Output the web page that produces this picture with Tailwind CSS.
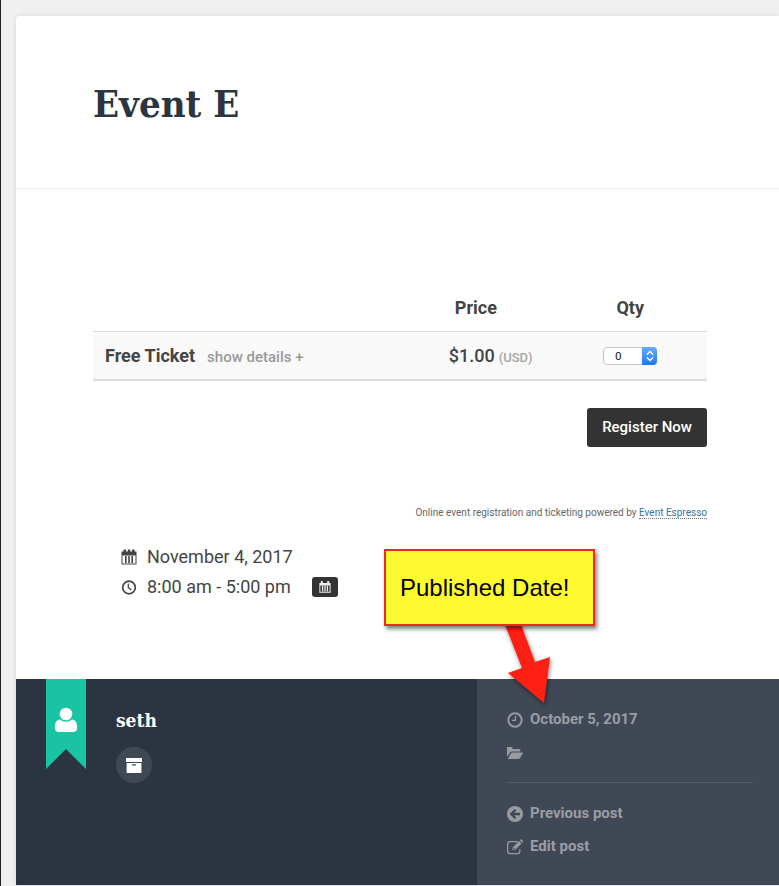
<!DOCTYPE html>
<html lang="en">
<head>
    <meta charset="UTF-8">
    <meta name="viewport" content="width=device-width, initial-scale=1.0">
    <title>Event E</title>
    <script src="https://cdn.jsdelivr.net/npm/@tailwindcss/browser@4"></script>
</head>
<body class="min-h-screen overflow-x-hidden border-l border-[#222222] bg-[#f0f0f0] pl-[15px] pt-4 font-[Roboto,sans-serif] text-[#444444]">
    <div class="relative rounded-tl-sm bg-white shadow-[0_0_5px_rgba(0,0,0,0.1)]">
        <!-- Title -->
        <header class="border-b border-[#ebebeb] pb-[62px] pl-[77px] pr-[72px] pt-[66px]">
            <h1 class="font-['DejaVu_Serif_Condensed','DejaVu_Serif',serif] text-[38px] font-bold leading-11 text-[#2b3541]">Event E</h1>
        </header>

        <!-- Tickets -->
        <main class="pb-[77px] pl-[77px] pr-[72px] pt-24">
            <table class="w-full table-fixed border-separate border-spacing-0">
                <thead>
                    <tr class="h-[46px] text-lg">
                        <td class="w-[56%]"></td>
                        <th class="w-[19%] pl-[18px] text-left font-bold">Price</th>
                        <th class="w-[25%] text-center font-bold">Qty</th>
                    </tr>
                </thead>
                <tbody>
                    <tr class="h-[50px]">
                        <td class="border-b-2 border-t border-[#dddddd] bg-[#f9f9f9] pl-3">
                            <div class="flex items-baseline gap-3">
                                <span class="text-lg font-bold">Free Ticket</span>
                                <a href="#" class="text-[15px] font-medium text-[#999999]">show details +</a>
                            </div>
                        </td>
                        <td class="whitespace-nowrap border-b-2 border-t border-[#dddddd] bg-[#f9f9f9] pl-3">
                            <span class="text-lg font-medium">$1.00</span>
                            <span class="text-[13px] font-medium text-[#a5a5a5]">(USD)</span>
                        </td>
                        <td class="border-b-2 border-t border-[#dddddd] bg-[#f9f9f9]">
                            <div class="relative mx-auto h-[18px] w-[54px]">
                                <select aria-label="Quantity" class="block h-[18px] w-full appearance-none rounded-[4px] border border-[#c4c4c4] bg-white pl-[11px] font-['Liberation_Sans',sans-serif] text-[11px] leading-4 text-black">
                                    <option>0</option>
                                    <option>1</option>
                                    <option>2</option>
                                </select>
                                <span class="pointer-events-none absolute right-0 top-0 flex h-[18px] w-[15px] items-center justify-center rounded-r-[4px] bg-linear-to-b from-[#66aef9] to-[#1a78f5]">
                                    <svg class="h-3 w-2" viewBox="0 0 8 12" fill="none" stroke="#fff" stroke-width="1.4" stroke-linecap="round" stroke-linejoin="round"><path d="M1.3 4.2 4 1.6l2.7 2.6M1.3 7.8 4 10.4l2.7-2.6"/></svg>
                                </span>
                            </div>
                        </td>
                    </tr>
                </tbody>
            </table>

            <div class="mt-[27px] flex justify-end">
                <button type="submit" class="h-[39px] rounded-[3px] bg-[#333333] px-[15px] text-[15px] font-medium text-white">Register Now</button>
            </div>

            <p class="mt-[57px] text-right text-[10px] leading-[18px] text-[#666666]">Online event registration and ticketing powered by <a href="#" class="border-b border-dotted border-[#777777] text-[#3a7399]">Event Espresso</a></p>

            <!-- Date and time -->
            <ul class="mt-5 pl-7 text-lg">
                <li class="flex h-[30px] items-center gap-[10px]">
                    <svg class="h-4 w-4" viewBox="0 0 16 16" fill="#444">
                        <path fill-rule="evenodd" d="M.5 2.500h15v13H.5zM1.500 6.500v8h13v-8z"/>
                        <path d="M2.500.5h2.500v3H2.500zM6.750.5h2.500v3h-2.500zM11 .5h2.500v3H11zM4 7h1.600v7H4zM7.200 7h1.600v7H7.200zM10.400 7H12v7h-1.600z"/>
                    </svg>
                    <span>November 4, 2017</span>
                </li>
                <li class="flex h-[30px] items-center gap-[10px]">
                    <svg class="h-4 w-4" viewBox="0 0 16 16" fill="none" stroke="#444" stroke-width="1.700"><circle cx="8" cy="8.500" r="6.300"/><path d="M7.300 4.500v4l3 2.600" stroke-width="1.300"/></svg>
                    <span>8:00 am - 5:00 pm</span>
                    <button type="button" aria-label="Add to calendar" class="ml-[11px] flex h-5 w-[26px] items-center justify-center rounded-[3px] bg-[#333333]">
                        <svg class="h-3 w-3" viewBox="0 0 16 16" fill="#eee">
                            <path fill-rule="evenodd" d="M.5 2.500h15v13H.5zM1.800 6v8.300h12.400V6z"/>
                            <path d="M2.500 0H5v3H2.500zM11 0h2.500v3H11zM4 6h1.700v8H4zM7.200 6h1.700v8H7.200zM10.400 6h1.700v8h-1.700z"/>
                        </svg>
                    </button>
                </li>
            </ul>
        </main>

        <!-- Author and post meta -->
        <footer class="flex min-h-[206px] bg-[#2b3541]">
            <div class="flex flex-1 items-start gap-[30px] pl-[30px]">
                <svg class="h-[90px] w-10" viewBox="0 0 40 90">
                    <path fill="#19c4a5" d="M0 0h40v90L20 70 0 90z"/>
                    <circle cx="20" cy="35" r="6.300" fill="#fff"/>
                    <path fill="#fff" d="M14 40.500c1.800 1.500 3.700 2.200 6 2.200s4.200-.7 6-2.200c3.500.2 5.200 3.300 5.200 8.200 0 2.800-1.400 4.300-4 4.300H13c-2.600 0-4.200-1.500-4.200-4.300 0-4.900 1.700-8 5.200-8.200z"/>
                </svg>
                <div class="pt-[30px]">
                    <h2 class="font-['DejaVu_Serif_Condensed','DejaVu_Serif',serif] text-[19px] font-bold leading-[22px] text-white">seth</h2>
                    <a href="#" aria-label="Author archive" class="mt-4 flex h-9 w-9 items-center justify-center rounded-full bg-[#414855]">
                        <svg class="h-4 w-4" viewBox="0 0 16 16" fill="#fff"><path d="M0 1h16v4H0z"/><path fill-rule="evenodd" d="M.6 6h14.800v10H.600zM6 7.200v1.300h4V7.200z"/></svg>
                    </a>
                </div>
            </div>
            <div class="w-[302px] shrink-0 bg-[#414855] pl-[30px] pr-[26px] pt-6 text-[15px] font-bold text-[#9a9da4]">
                <div class="flex h-[33px] items-center gap-[7px]">
                    <svg class="h-4 w-4" viewBox="0 0 16 16" fill="none" stroke="#999a9f"><circle cx="8" cy="8" r="6.700" stroke-width="2"/><path d="M8.400 4v4.400H5" stroke-width="1.400"/></svg>
                    <a href="#">October 5, 2017</a>
                </div>
                <div class="flex h-[33px] items-center">
                    <svg class="h-4 w-4" viewBox="0 0 16 16" fill="#999a9f"><path d="M0 12V2.500Q0 2 .6 2h4q.8 0 .8.800V4h7q.9 0 .9.900v1.600H5.500q-1.500 0-2.500 1z"/><path d="M.7 14 3.800 8.500q.6-1 1.800-1h9.800q.9 0 .4.800l-2.700 4.700q-.6 1-1.700 1z"/></svg>
                </div>
                <hr class="mb-[14px] mt-[13px] border-[#555c68]">
                <div class="flex h-[33px] items-center gap-[7px]">
                    <svg class="h-4 w-4" viewBox="0 0 16 16"><circle cx="8" cy="8" r="8" fill="#999a9f"/><path d="M8.500 3.700 4.200 8l4.300 4.300M4.500 8H13" fill="none" stroke="#414855" stroke-width="2.300"/></svg>
                    <a href="#">Previous post</a>
                </div>
                <div class="flex h-[33px] items-center gap-[7px]">
                    <svg class="h-4 w-4" viewBox="0 0 16 16"><path d="M10.500 2.700H3q-2.300 0-2.300 2.300v7.300q0 2.300 2.300 2.300h7.500q2.300 0 2.300-2.300v-2" fill="none" stroke="#999a9f" stroke-width="1.300"/><path fill="#999a9f" fill-rule="evenodd" d="M5.500 8.500 12 2l2.500 2.500L8 11H5.500zM6.500 9v1.200h1.200l.5-.5L7 8.500zM12.700 1.300l.8-.8q.5-.4 1 0L16 2q.4.500 0 1l-.8.800z"/></svg>
                    <a href="#">Edit post</a>
                </div>
            </div>
        </footer>

        <!-- Callout over the page -->
        <div class="pointer-events-none absolute left-[368px] top-[533px]">
            <svg class="absolute left-[116px] top-[70px] h-24 w-[60px] drop-shadow-[1px_2px_2px_rgba(0,0,0,0.5)]" viewBox="0 0 60 96"><path fill="#ff2014" d="M4 3h16l15 40 15-5-6 46L8 54l14-5z"/></svg>
            <div class="relative flex h-[77px] w-[211px] items-center border-2 border-[#ea2a1c] bg-[#fffa2f] pl-[14px] font-['Liberation_Sans',sans-serif] text-2xl text-black shadow-[2px_3px_4px_rgba(0,0,0,0.5)]">Published Date!</div>
        </div>
    </div>
</body>
</html>
